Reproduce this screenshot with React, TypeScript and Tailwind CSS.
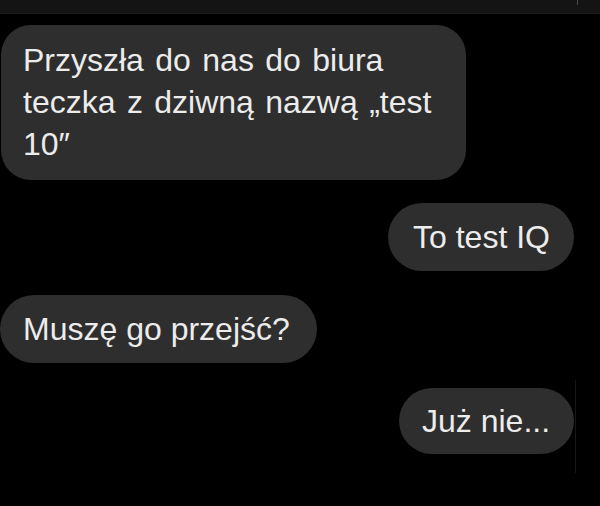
import React from "react";

const font = { fontFamily: '"Liberation Sans", Arial, sans-serif' };

export default function App() {
  return (
    <div
      className="w-[600px] h-[506px] bg-black overflow-hidden flex flex-col text-[#ececec] text-[32px]"
      style={font}
    >
      <div className="h-[14px] bg-[#141414] border-b border-[#1b1b1b] flex justify-end shrink-0">
        <div className="w-px h-[5px] bg-[#4a4a4a] mr-[22px]" />
      </div>

      <div className="mt-[11px] ml-[1px] w-[465px] h-[155px] bg-[#2e2e2e] rounded-[30px] pl-[22px] pt-[14px] leading-[42px] [word-spacing:2.5px]">
        Przyszła do nas do biura
        <br />
        teczka z dziwną nazwą „test
        <br />
        10″
      </div>

      <div className="mt-[23px] flex justify-end pr-[26px]">
        <div className="h-[68px] w-[186px] rounded-full bg-[#2e2e2e] flex items-center pl-[25px] leading-none">
          To test IQ
        </div>
      </div>

      <div className="mt-[24px] flex">
        <div className="h-[68px] w-[317px] rounded-full bg-[#2e2e2e] flex items-center pl-[23px] leading-none">
          Muszę go przejść?
        </div>
      </div>

      <div className="mt-[25px] flex justify-end pr-[26px] relative">
        <div className="h-[66px] w-[175px] rounded-full bg-[#2e2e2e] flex items-center pl-[23px] leading-none">
          Już nie...
        </div>
        <div className="absolute right-[24px] top-[-8px] w-px h-[93px] bg-[#171717]" />
      </div>
    </div>
  );
}
